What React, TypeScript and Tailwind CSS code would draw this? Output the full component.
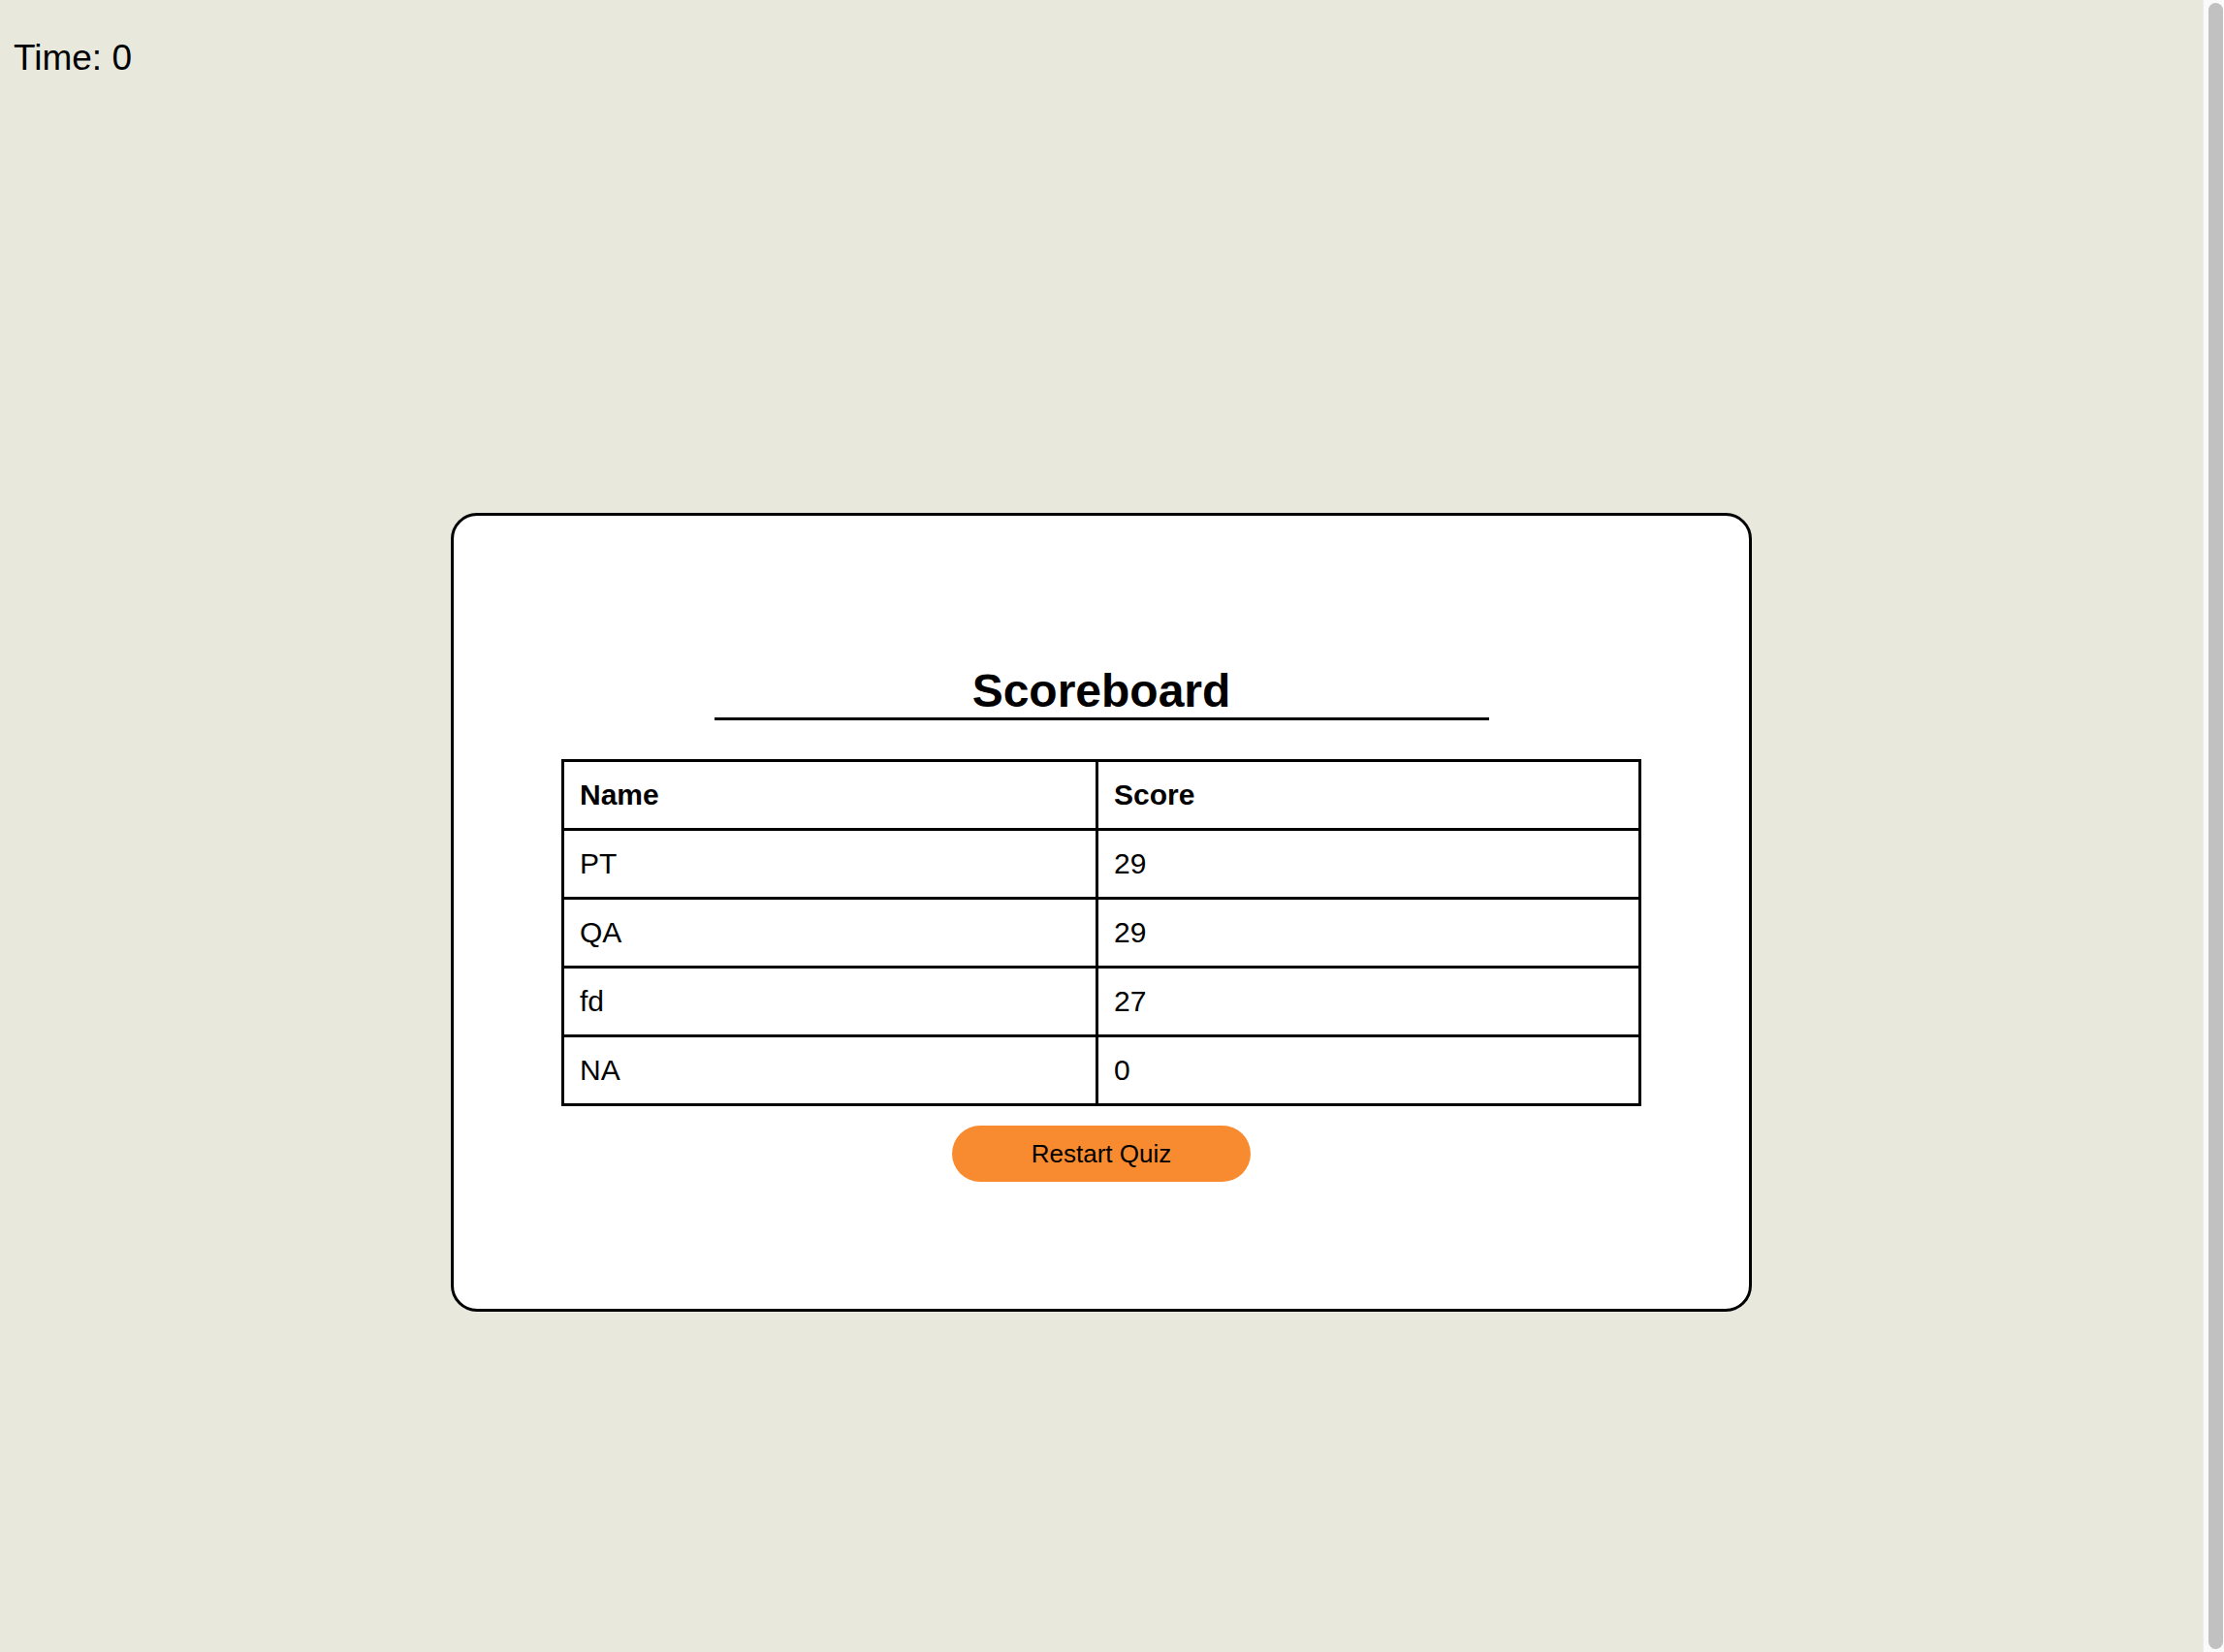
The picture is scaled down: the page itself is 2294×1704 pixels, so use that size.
const scores = [
  { name: 'PT', score: 29 },
  { name: 'QA', score: 29 },
  { name: 'fd', score: 27 },
  { name: 'NA', score: 0 },
]

export default function App() {
  return (
    <div className="flex h-screen bg-[#e8e8dd] text-black font-['Liberation_Sans',Arial,sans-serif]">
      <div className="flex-1 overflow-hidden">
        {/* timer */}
        <div className="pl-[14px] pt-[39px] text-[37px] leading-[41px]">Time: 0</div>

        {/* scoreboard card */}
        <div className="mx-auto mt-[449px] w-[1342px] rounded-[27px] border-[3px] border-black bg-white pt-[154px] pb-[131px]">
          <h2 className="mx-auto w-[799px] border-b-[3px] border-black text-center text-[48px] font-bold leading-[54px]">
            Scoreboard
          </h2>

          <table className="mx-auto mt-[40px] w-[1114px] border-collapse text-left text-[30px]">
            <thead>
              <tr>
                <th className="w-[551px] border-[3px] border-black px-[16px] py-[17px] leading-[34px] font-bold">Name</th>
                <th className="border-[3px] border-black px-[16px] py-[17px] leading-[34px] font-bold">Score</th>
              </tr>
            </thead>
            <tbody>
              {scores.map((s) => (
                <tr key={s.name}>
                  <td className="border-[3px] border-black px-[16px] py-[17px] leading-[34px]">{s.name}</td>
                  <td className="border-[3px] border-black px-[16px] py-[17px] leading-[34px]">{s.score}</td>
                </tr>
              ))}
            </tbody>
          </table>

          <div className="mt-[20px] flex justify-center">
            <button
              type="button"
              className="h-[58px] w-[308px] rounded-full bg-[#f88a30] text-[26px] text-black"
            >
              Restart Quiz
            </button>
          </div>
        </div>
      </div>

      {/* scrollbar */}
      <div className="w-[22px] shrink-0 border-l border-[#ececec] bg-[#fafafa] py-[3px] pl-[5px] pr-[1px]">
        <div className="h-full rounded-full bg-[#c1c1c1]" />
      </div>
    </div>
  )
}
